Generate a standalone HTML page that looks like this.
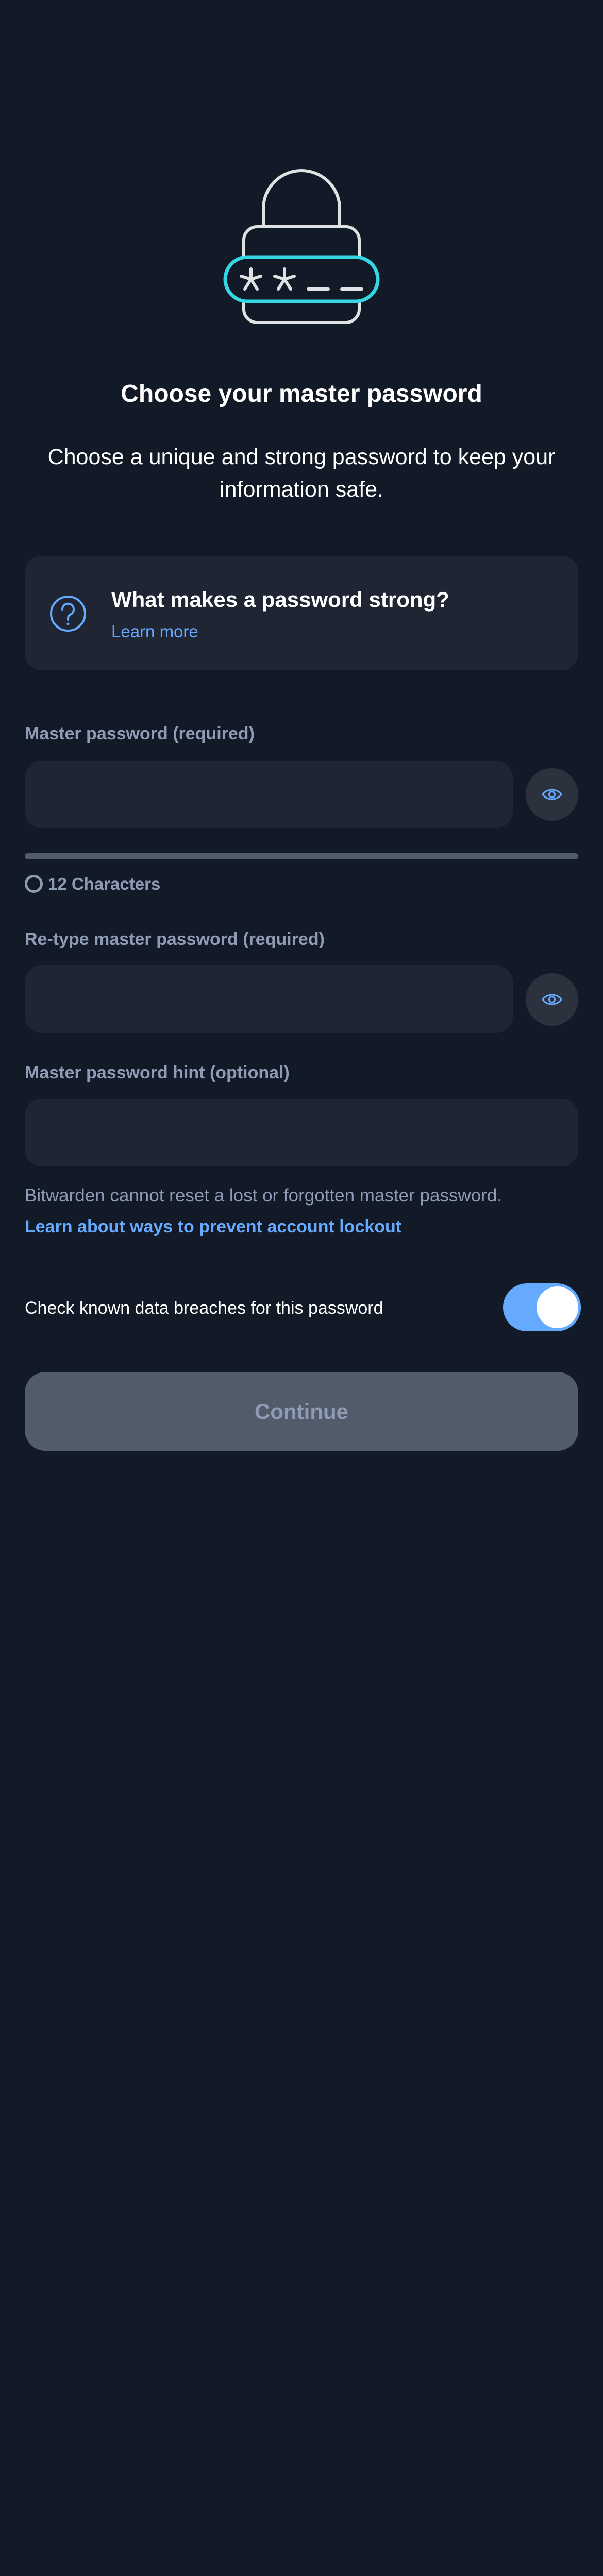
<!DOCTYPE html>
<html><head><meta charset="utf-8">
<style>
*{margin:0;padding:0;box-sizing:border-box}
html,body{width:1170px;height:5064px;background:#121a27;overflow:hidden}
body{position:relative;font-family:"Liberation Sans",sans-serif;color:#fff}
.a{position:absolute}
.lbl{left:48px;font-size:34px;font-weight:bold;color:#8d9bb5;line-height:40px;white-space:nowrap}
.inp{background:#1f2532;border-radius:32px}
.eye{width:102px;height:102px;border-radius:50%;background:#2b313d;left:1020px;display:flex;align-items:center;justify-content:center}
</style></head><body>
<svg class="a" style="left:0;top:0" width="1170" height="700" viewBox="0 0 1170 700">
 <g fill="none" stroke="#e0e1e3" stroke-width="6" stroke-linecap="round">
  <path d="M511 440 V405 A74 74 0 0 1 659 405 V440"/>
  <path d="M473 499 V466 A26 26 0 0 1 499 440 H671 A26 26 0 0 1 697 466 V499"/>
  <path d="M473 585 V600 A26 26 0 0 0 499 626 H671 A26 26 0 0 0 697 600 V585"/>
  <path d="M487 522 V542 M468 536 L487 542 L506 536 M475 561 L487 542 L499 561"/>
  <path d="M552 522 V542 M533 536 L552 542 L571 536 M540 561 L552 542 L564 561"/>
  <path d="M598 561 H637 M663 561 H702"/>
 </g>
 <rect x="437" y="499" width="296" height="86" rx="43" fill="none" stroke="#33d6e2" stroke-width="7"/>
</svg>
<div class="a" style="left:0;width:1170px;top:737px;text-align:center;font-size:48px;font-weight:bold;line-height:56px">Choose your master password</div>
<div class="a" style="left:0;width:1170px;top:856px;text-align:center;font-size:43px;line-height:63px;white-space:nowrap">Choose a unique and strong password to keep your<br>information safe.</div>
<div class="a inp" style="left:48px;top:1079px;width:1074px;height:222px;border-radius:32px"></div>
<svg class="a" style="left:96px;top:1155px" width="72" height="72" viewBox="0 0 72 72"><circle cx="36" cy="36" r="33" fill="none" stroke="#66aaff" stroke-width="4"/><path d="M25 28 A11 11 0 1 1 40 38 C37 40 36 42 36 46 V48" fill="none" stroke="#66aaff" stroke-width="4" stroke-linecap="round"/><circle cx="36" cy="56" r="2.5" fill="#66aaff"/></svg>
<div class="a" style="left:216px;top:1138px;font-size:42px;font-weight:bold;line-height:52px">What makes a password strong?</div>
<div class="a" style="left:216px;top:1205px;font-size:33px;color:#66aaff;line-height:42px">Learn more</div>

<div class="a lbl" style="top:1404px">Master password (required)</div>
<div class="a inp" style="left:48px;top:1477px;width:947px;height:130px"></div>
<div class="a eye" style="top:1491px"><svg width="40" height="26" viewBox="0 0 40 26"><path d="M2 13 C10 1 30 1 38 13 C30 25 10 25 2 13Z" fill="none" stroke="#66aaff" stroke-width="3"/><circle cx="20" cy="13" r="5.5" fill="none" stroke="#66aaff" stroke-width="3"/></svg></div>
<div class="a" style="left:48px;top:1656px;width:1074px;height:12px;border-radius:6px;background:#525b6a"></div>
<div class="a" style="left:48px;top:1698px;width:35px;height:35px;border-radius:50%;border:5px solid #8d9bb5"></div>
<div class="a" style="left:93px;top:1696px;font-size:33px;font-weight:bold;color:#8d9bb5;line-height:40px">12 Characters</div>

<div class="a lbl" style="top:1803px">Re-type master password (required)</div>
<div class="a inp" style="left:48px;top:1874px;width:947px;height:131px"></div>
<div class="a eye" style="top:1889px"><svg width="40" height="26" viewBox="0 0 40 26"><path d="M2 13 C10 1 30 1 38 13 C30 25 10 25 2 13Z" fill="none" stroke="#66aaff" stroke-width="3"/><circle cx="20" cy="13" r="5.5" fill="none" stroke="#66aaff" stroke-width="3"/></svg></div>

<div class="a lbl" style="top:2062px">Master password hint (optional)</div>
<div class="a inp" style="left:48px;top:2133px;width:1074px;height:131px"></div>

<div class="a" style="left:48px;top:2301px;font-size:35px;color:#8d9bb5;line-height:40px;white-space:nowrap">Bitwarden cannot reset a lost or forgotten master password.</div>
<div class="a" style="left:48px;top:2361px;font-size:34px;font-weight:bold;color:#66aaff;line-height:40px;white-space:nowrap">Learn about ways to prevent account lockout</div>

<div class="a" style="left:48px;top:2519px;font-size:34px;line-height:40px;white-space:nowrap">Check known data breaches for this password</div>
<div class="a" style="left:976px;top:2491px;width:151px;height:93px;border-radius:47px;background:#66aaff"></div>
<div class="a" style="left:1041px;top:2497px;width:81px;height:81px;border-radius:50%;background:#fff"></div>

<div class="a" style="left:48px;top:2663px;width:1074px;height:153px;border-radius:40px;background:#525b6a;text-align:center;line-height:153px;font-size:42px;font-weight:bold;color:#8d9bb5">Continue</div>
</body></html>
